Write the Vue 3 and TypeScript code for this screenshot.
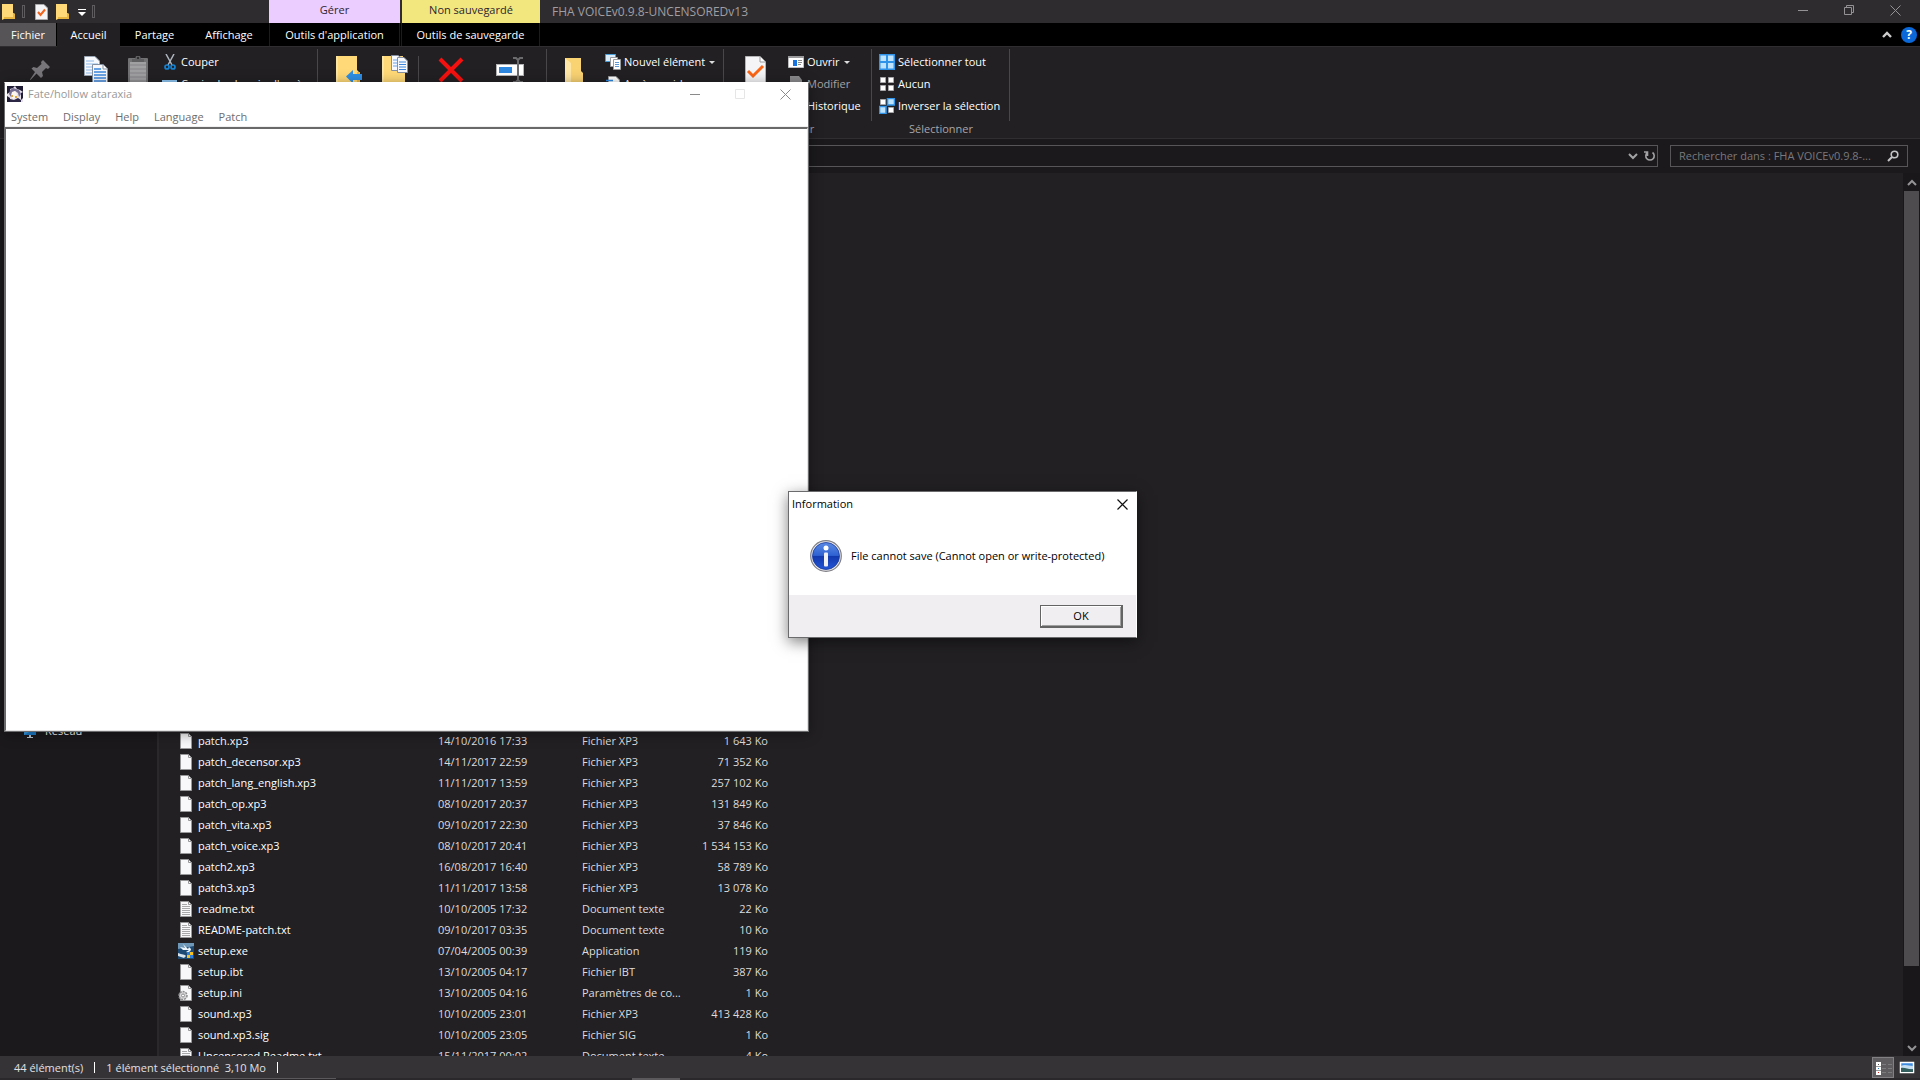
<script setup lang="ts">
type FileKind = 'file' | 'text' | 'setup' | 'ini'

interface FileRow {
  name: string
  date: string
  type: string
  size: string
  kind: FileKind
}

const files: FileRow[] = [
  { name: 'patch.xp3', date: '14/10/2016 17:33', type: 'Fichier XP3', size: '1 643 Ko', kind: 'file' },
  { name: 'patch_decensor.xp3', date: '14/11/2017 22:59', type: 'Fichier XP3', size: '71 352 Ko', kind: 'file' },
  { name: 'patch_lang_english.xp3', date: '11/11/2017 13:59', type: 'Fichier XP3', size: '257 102 Ko', kind: 'file' },
  { name: 'patch_op.xp3', date: '08/10/2017 20:37', type: 'Fichier XP3', size: '131 849 Ko', kind: 'file' },
  { name: 'patch_vita.xp3', date: '09/10/2017 22:30', type: 'Fichier XP3', size: '37 846 Ko', kind: 'file' },
  { name: 'patch_voice.xp3', date: '08/10/2017 20:41', type: 'Fichier XP3', size: '1 534 153 Ko', kind: 'file' },
  { name: 'patch2.xp3', date: '16/08/2017 16:40', type: 'Fichier XP3', size: '58 789 Ko', kind: 'file' },
  { name: 'patch3.xp3', date: '11/11/2017 13:58', type: 'Fichier XP3', size: '13 078 Ko', kind: 'file' },
  { name: 'readme.txt', date: '10/10/2005 17:32', type: 'Document texte', size: '22 Ko', kind: 'text' },
  { name: 'README-patch.txt', date: '09/10/2017 03:35', type: 'Document texte', size: '10 Ko', kind: 'text' },
  { name: 'setup.exe', date: '07/04/2005 00:39', type: 'Application', size: '119 Ko', kind: 'setup' },
  { name: 'setup.ibt', date: '13/10/2005 04:17', type: 'Fichier IBT', size: '387 Ko', kind: 'file' },
  { name: 'setup.ini', date: '13/10/2005 04:16', type: 'Paramètres de co...', size: '1 Ko', kind: 'ini' },
  { name: 'sound.xp3', date: '10/10/2005 23:01', type: 'Fichier XP3', size: '413 428 Ko', kind: 'file' },
  { name: 'sound.xp3.sig', date: '10/10/2005 23:05', type: 'Fichier SIG', size: '1 Ko', kind: 'file' },
  { name: 'Uncensored Readme.txt', date: '15/11/2017 00:02', type: 'Document texte', size: '4 Ko', kind: 'text' },
]

const menus: string[] = ['System', 'Display', 'Help', 'Language', 'Patch']
</script>

<template>
  <div class="desktop">
    <main class="explorer">
      <header class="titlebar">
        <div class="quick">
          <svg class="q-icon" width="14" height="16" viewBox="0 0 14 16"><path d="M0 0H11V9L13 10V15H2L0 16Z" fill="#ffd977" /><path d="M2 15H13V10L11 9V13H2Z" fill="#e9b740" /></svg>
          <i class="q-sep"></i>
          <svg class="q-icon" width="13" height="16" viewBox="0 0 13 16"><path d="M.5.5H9L12.500 4V15.500H.5Z" fill="#f4f4f6" stroke="#a9a9ab" /><path d="M3 8L5.500 11L10 5.500" fill="none" stroke="#f2631c" stroke-width="2" /></svg>
          <svg class="q-icon" width="14" height="16" viewBox="0 0 14 16"><path d="M0 0H11V9L13 10V15H2L0 16Z" fill="#ffd977" /><path d="M2 15H13V10L11 9V13H2Z" fill="#e9b740" /></svg>
          <svg class="q-icon" width="8" height="8" viewBox="0 0 8 8"><path d="M0 1.500H8" stroke="#fff" /><path d="M0 4H8L4 8Z" fill="#fff" /></svg>
          <i class="q-sep"></i>
        </div>
        <div class="context purple">Gérer</div>
        <div class="context yellow">Non sauvegardé</div>
        <h1 class="title">FHA VOICEv0.9.8-UNCENSOREDv13</h1>
        <div class="win-buttons">
          <button type="button" aria-label="Réduire"><svg width="11" height="11" viewBox="0 0 11 11"><path d="M0 5.500H10" stroke="#949294" /></svg></button>
          <button type="button" aria-label="Restaurer"><svg width="11" height="11" viewBox="0 0 11 11" fill="none" stroke="#949294"><path d="M.5 2.500H7.500V9.500H.5ZM2.500 2.500V.5H9.500V7.500H7.500" /></svg></button>
          <button type="button" aria-label="Fermer"><svg width="11" height="11" viewBox="0 0 11 11"><path d="M.5.5L10.500 10.500M10.500.5L.5 10.500" stroke="#949294" /></svg></button>
        </div>
      </header>

      <nav class="tabs">
        <button type="button" class="tab file">Fichier</button>
        <button type="button" class="tab home">Accueil</button>
        <button type="button" class="tab share">Partage</button>
        <button type="button" class="tab view">Affichage</button>
        <button type="button" class="tab app-tools">Outils d'application</button>
        <button type="button" class="tab save-tools">Outils de sauvegarde</button>
        <div class="tab-tail">
          <svg width="10" height="7" viewBox="0 0 10 7"><path d="M1 6L5 2L9 6" fill="none" stroke="#ccc" stroke-width="2.400" /></svg>
          <span class="help">?</span>
        </div>
      </nav>

      <section class="ribbon">
        <div class="group g-clip">
          <div class="tools">
            <button type="button" class="big pin" aria-label="Épingler">
              <svg width="32" height="32" viewBox="0 0 32 32"><path d="M19 5L26 12L24 14L22 13L18 17L19 21L17 23L12.500 18.500L6.500 25L6 24.500L11 17L7.500 13.500L9.500 12L13 13L17.500 9L17 7Z" fill="#77757a" /></svg>
            </button>
            <button type="button" class="big copy" aria-label="Copier">
              <svg width="32" height="32" viewBox="0 0 32 32"><path d="M4.500 1.500H15L19.500 6V20.500H4.500Z" fill="#f7f9fc" stroke="#9aa6b5" /><path d="M6 6H14M6 9H18M6 12H18M6 15H18M6 18H18" stroke="#8db8ea" /><path d="M12.500 9.500H23L27.500 14V31.500H12.500Z" fill="#f7f9fc" stroke="#8591a2" /><path d="M23 9.500V14H27.500" fill="#fff" stroke="#8591a2" /><path d="M14 14H21M14 17H26M14 20H26M14 23H26M14 26H26M14 29H26" stroke="#3d86dd" stroke-width="1.500" /></svg>
            </button>
            <button type="button" class="big paste" aria-label="Coller">
              <svg width="32" height="32" viewBox="0 0 32 32"><rect x="6" y="3" width="20" height="29" rx="1" fill="#727174" /><rect x="8" y="7" width="16" height="24" fill="#a09fa2" /><path d="M8 10H24M8 14H24M8 18H24M8 22H24M8 26H24" stroke="#858487" /><path d="M10 7V4H13L14 1H18L19 4H22V7Z" fill="#5f5e61" /><circle cx="16" cy="3" r="1" fill="#222" /></svg>
            </button>
            <div class="small-col">
              <button type="button" class="small">
                <svg width="16" height="16" viewBox="0 0 16 16" fill="none"><path d="M4 0L10 11M12 0L6 11" stroke="#aeb7bf" stroke-width="1.500" /><circle cx="5" cy="13" r="2" stroke="#1583d2" stroke-width="1.700" /><circle cx="11" cy="13" r="2" stroke="#1583d2" stroke-width="1.700" /></svg>Couper
              </button>
              <button type="button" class="small">
                <svg width="16" height="16" viewBox="0 0 16 16"><path d="M0 4H15V14H0Z" fill="#8fc5f2" /><path d="M2 7H13V12H2Z" fill="#fff" /></svg>Copier le chemin d'accès
              </button>
            </div>
          </div>
        </div>

        <div class="group g-org">
          <div class="tools">
            <button type="button" class="big move" aria-label="Déplacer vers">
              <svg width="32" height="32" viewBox="0 0 32 32"><path d="M3 1H24V15L27 18V32H3Z" fill="#ffd977" /><path d="M3 1H5V32H3Z" fill="#fbe5a5" /><path d="M24 17H27V32H24Z" fill="#e8b646" /><path d="M13 21.500L20 15V19H29V25H20V28.500Z" fill="#2f8fe5" /></svg>
            </button>
            <button type="button" class="big move" aria-label="Copier vers">
              <svg width="32" height="32" viewBox="0 0 32 32"><path d="M3 1H24V15L26 18V32H3Z" fill="#ffd977" /><path d="M3 1H5V32H3Z" fill="#fbe5a5" /><path d="M12.500.5H19L22.500 3V15.500H12.500Z" fill="#f7f9fc" stroke="#8591a2" /><path d="M14 5H20M14 8H20M14 11H20" stroke="#6da4e8" /><path d="M18.500 2.500H25L28.500 6V17.500H18.500Z" fill="#f7f9fc" stroke="#8591a2" /><path d="M20 7H27M20 9.500H27M20 12H27M20 14.500H27" stroke="#3d86dd" /></svg>
            </button>
            <i class="inner-sep"></i>
            <button type="button" class="big delete" aria-label="Supprimer">
              <svg width="32" height="32" viewBox="0 0 32 32"><path d="M5 4L27 26M27 4L5 26" stroke="#f5110f" stroke-width="4" /></svg>
            </button>
            <button type="button" class="big rename" aria-label="Renommer">
              <svg width="32" height="32" viewBox="0 0 32 32"><rect x="2.500" y="9.500" width="27" height="11" fill="#fff" stroke="#b4b3b6" /><rect x="5" y="12" width="13" height="6" fill="#2d88e2" /><path d="M19 3H22L24 5L26 3H29M24 5V25M19 27H22L24 25L26 27H29" fill="none" stroke="#6b6a6d" stroke-width="2" /></svg>
            </button>
          </div>
        </div>

        <div class="group g-new">
          <div class="tools">
            <button type="button" class="big folder" aria-label="Nouveau dossier">
              <svg width="32" height="32" viewBox="0 0 32 32"><path d="M7 3H23V16L25 18V32H7Z" fill="#f9d272" /><path d="M7 3L13 8V32H7Z" fill="#fee6a6" /></svg>
            </button>
            <div class="small-col">
              <button type="button" class="small">
                <svg width="16" height="16" viewBox="0 0 16 16"><path d="M.5.500H10.500V7.500H.5Z" fill="#d9edfb" stroke="#4b9fd8" /><path d="M5.500 3.500H12.500V12.500H5.500Z" fill="#fff" stroke="#9a9a9d" /><path d="M8.500 5.500H15.500V15.500H8.500Z" fill="#fff" stroke="#9a9a9d" /><path d="M10 8.500H14M10 10.500H14M10 12.500H14" stroke="#5d97d4" /></svg>Nouvel élément<i class="caret"></i>
              </button>
              <button type="button" class="small">
                <svg width="16" height="16" viewBox="0 0 16 16"><path d="M3.500.500H11L14.500 4V15.500H3.500Z" fill="#fff" stroke="#9a9a9d" /><path d="M1 4.500H8M5 7.500H12" stroke="#2d88e2" stroke-width="1.500" /></svg>Accès rapide
              </button>
            </div>
          </div>
        </div>

        <div class="group g-open">
          <div class="tools">
            <button type="button" class="big props" aria-label="Propriétés">
              <svg width="32" height="32" viewBox="0 0 32 32"><path d="M6.500 1.500H21L26.500 7V31.500H6.500Z" fill="#f5f5f7" stroke="#b4b4b7" /><path d="M21 1.500V7H26.500" fill="#fff" stroke="#9a9a9d" /><path d="M9 16L14 21L24 11" fill="none" stroke="#fb6514" stroke-width="3" /></svg>
            </button>
            <div class="small-col">
              <button type="button" class="small">
                <svg width="16" height="16" viewBox="0 0 16 16"><path d="M.5 2.500H15.500V13.500H.5Z" fill="#fff" stroke="#bdbdc0" /><path d="M0 3H16" stroke="#9a9a9d" stroke-width="2" /><path d="M5 6H9V12H5Z" fill="#1673e0" /><path d="M10 6.500H14M10 8.500H14M10 10.500H13" stroke="#888" /></svg>Ouvrir<i class="caret"></i>
              </button>
              <button type="button" class="small dim">
                <svg width="16" height="16" viewBox="0 0 16 16"><path d="M2 0H11L14 4V16H2Z" fill="#8a898c" /></svg>Modifier
              </button>
              <button type="button" class="small">
                <svg width="16" height="16" viewBox="0 0 16 16"><circle cx="8" cy="8" r="7" fill="#4b9fd8" /></svg>Historique
              </button>
            </div>
          </div>
          <span class="group-label">Ouvrir</span>
        </div>

        <div class="group g-select">
          <div class="tools">
            <div class="small-col">
              <button type="button" class="small">
                <svg width="16" height="16" viewBox="0 0 16 16"><path d="M0 0H16V16H0Z" fill="#2f93e8" /><path d="M1.500 1.500H7V7H1.500ZM9 1.500H14.500V7H9ZM1.500 9H7V14.500H1.500ZM9 9H14.500V14.500H9Z" fill="#bfe2fd" /></svg>Sélectionner tout
              </button>
              <button type="button" class="small">
                <svg width="16" height="16" viewBox="0 0 16 16" fill="#fff" stroke="#a8a7aa"><path d="M1.500 1.500H6.500V6.500H1.500ZM9.500 1.500H14.500V6.500H9.500ZM1.500 9.500H6.500V14.500H1.500ZM9.500 9.500H14.500V14.500H9.500Z" /></svg>Aucun
              </button>
              <button type="button" class="small">
                <svg width="16" height="16" viewBox="0 0 16 16"><path d="M1.500 1.500H6.500V6.500H1.500ZM9.500 9.500H14.500V14.500H9.500Z" fill="#fff" stroke="#a8a7aa" /><path d="M8.500.5H15.500V7H8.500ZM.5 8.500H7V15.500H.5Z" fill="#bfe2fd" stroke="#2f93e8" stroke-width="1.600" /></svg>Inverser la sélection
              </button>
            </div>
          </div>
          <span class="group-label">Sélectionner</span>
        </div>
      </section>

      <div class="address-row">
        <div class="address">
          <svg width="10" height="8" viewBox="0 0 10 8"><path d="M1 2L5 6L9 2" fill="none" stroke="#a3a2a4" stroke-width="2" /></svg>
          <svg width="12" height="12" viewBox="0 0 12 12"><path d="M8.500 2.500A4.200 4.200 0 1 1 3.500 2.500M3.500 6V2H0" fill="none" stroke="#a3a2a4" stroke-width="1.600" /></svg>
        </div>
        <div class="search">
          <input type="search" aria-label="Rechercher" placeholder="Rechercher dans : FHA VOICEv0.9.8-..." />
          <svg width="12" height="12" viewBox="0 0 12 12"><circle cx="7.500" cy="4.500" r="3.300" fill="none" stroke="#c4c3c5" stroke-width="1.600" /><path d="M5 7L1 11" stroke="#c4c3c5" stroke-width="2" /></svg>
        </div>
      </div>

      <div class="body">
        <aside class="sidebar">
          <a class="network" href="#">
            <svg width="16" height="16" viewBox="0 0 16 16"><path d="M2 1H14V12H2Z" fill="#3aa3ea" /><path d="M2 12L14 5V12Z" fill="#1c7fcf" /><path d="M7 12H9V14H7ZM5 14H11V15H5Z" fill="#b9c7d2" /></svg>Réseau
          </a>
        </aside>
        <div class="list">
          <table>
            <tbody>
              <tr v-for="f in files" :key="f.name">
                <td class="c-name">
                  <span class="name">
                    <svg width="16" height="16" viewBox="0 0 16 16">
                      <template v-if="f.kind === 'setup'">
                        <rect width="16" height="16" fill="#1d4a75" /><path d="M0 0H16V3L0 6Z" fill="#6f97b8" /><path d="M5 1L7 5L2 4L5 7L11 7L8 9C11 10 13 8 13 6L11 4L10 6Z" fill="#eef6fb" /><path d="M0 10C4 12 7 11 8 13L6 15L0 13Z" fill="#d8e4ec" /><path d="M9 9H12V12H9ZM12 12H15V15H12Z" fill="#2b7de0" /><path d="M12 9H15V12H12ZM9 12H12V15H9Z" fill="#f7c21d" />
                      </template>
                      <template v-else>
                        <path d="M2.500.500H10.500L13.500 3.500V15.500H2.500Z" fill="#f8f8fa" stroke="#98979a" /><path d="M10.500.5V3.500H13.500" fill="none" stroke="#98979a" />
                        <path v-if="f.kind === 'text'" d="M4 3.500H9M4 5.500H12M4 7.500H12M4 9.500H12M4 11.500H12M4 13.500H12" stroke="#a8a7aa" />
                        <g v-if="f.kind === 'ini'"><circle cx="5" cy="10.500" r="4" fill="#d5d4d7" stroke="#8d8c8f" stroke-width="1.500" stroke-dasharray="2 1" /><circle cx="5" cy="10.500" r="1.500" fill="#fff" stroke="#8d8c8f" /></g>
                      </template>
                    </svg>{{ f.name }}
                  </span>
                </td>
                <td class="c-date">{{ f.date }}</td>
                <td class="c-type">{{ f.type }}</td>
                <td class="c-size">{{ f.size }}</td>
              </tr>
            </tbody>
          </table>
        </div>
        <div class="scrollbar">
          <svg width="10" height="8" viewBox="0 0 10 8"><path d="M1 6L5 2L9 6" fill="none" stroke="#949395" stroke-width="2" /></svg>
          <div class="track"><div class="thumb"></div><div class="rest"></div></div>
          <svg width="10" height="8" viewBox="0 0 10 8"><path d="M1 2L5 6L9 2" fill="none" stroke="#949395" stroke-width="2" /></svg>
        </div>
      </div>

      <footer class="status">
        <span>44 élément(s)</span><i></i><span class="picked">1 élément sélectionné&nbsp; 3,10 Mo</span><i></i>
        <div class="views">
          <button type="button" class="view-btn active" aria-label="Détails"><svg width="22" height="20" viewBox="0 0 22 20"><path d="M3 4H8V17H3Z" fill="#fff" /><path d="M5 6.500H6" stroke="#555" /><path d="M5 10.500H6" stroke="#2779c9" /><path d="M5 14.500H6" stroke="#d22" /><path d="M3 8.500H8M3 12.500H8" stroke="#99989b" /><path d="M9 6.500H13M15 6.500H19M9 10.500H13M15 10.500H19M9 14.500H13M15 14.500H19" stroke="#7c7b7e" /></svg></button>
          <button type="button" class="view-btn" aria-label="Grandes icônes"><svg width="22" height="20" viewBox="0 0 22 20"><rect x="4.500" y="4.500" width="13" height="10" fill="#3f8be0" stroke="#fff" stroke-width="1.500" /><path d="M5 8C9 6 13 8 17 8V11H5Z" fill="#c5def2" /><path d="M5 10C9 9 13 12 17 11V14H5Z" fill="#33605f" /></svg></button>
        </div>
      </footer>
      <div class="taskbar"><i class="task wide"></i><i class="task"></i></div>
    </main>

    <section class="game">
      <header class="game-title">
        <svg width="16" height="16" viewBox="0 0 16 16"><rect width="16" height="16" fill="#e4dfe8" /><path d="M0 0H8L6 2L3 3V6L0 8ZM8 0H16V6L13 4L10 3ZM0 10L3 12V16H0ZM14 7L16 6V12L14 14Z" fill="#201c35" /><path d="M3 4L6 2L12 4L14 8L12 11L11 7L8 5L5 7L4 11L2 8Z" fill="#776f92" /><path d="M5 6L8 5L10 8L9 12L6 13L4 10Z" fill="#fdf6ef" /><path d="M4 9H6V11H4ZM8 10H10V12H8Z" fill="#e1a63c" /><path d="M3 13L7 14L11 12L14 14V16H3Z" fill="#2b2744" /></svg>
        <h2>Fate/hollow ataraxia</h2>
        <div class="game-buttons">
          <button type="button" aria-label="Minimize"><svg width="11" height="11" viewBox="0 0 11 11"><path d="M0 5.500H10" stroke="#8a8a8a" /></svg></button>
          <button type="button" aria-label="Maximize" disabled><svg width="11" height="11" viewBox="0 0 11 11"><path d="M.5.5H9.500V9.500H.5Z" fill="none" stroke="#e6e6e6" /></svg></button>
          <button type="button" aria-label="Close"><svg width="11" height="11" viewBox="0 0 11 11"><path d="M.5.5L10.500 10.500M10.500.5L.5 10.500" stroke="#8a8a8a" /></svg></button>
        </div>
      </header>
      <nav class="game-menu"><button v-for="m in menus" :key="m" type="button">{{ m }}</button></nav>
      <div class="canvas"></div>
    </section>

    <section class="dialog" role="dialog" aria-labelledby="dialog-title">
      <header>
        <h2 id="dialog-title">Information</h2>
        <button type="button" aria-label="Close"><svg width="11" height="11" viewBox="0 0 11 11"><path d="M.5.5L10.500 10.500M10.500.5L.5 10.500" stroke="#111" stroke-width="1.200" /></svg></button>
      </header>
      <div class="message">
        <svg width="32" height="32" viewBox="0 0 32 32">
          <defs><linearGradient id="blue" x2="0" y2="1"><stop offset="0" stop-color="#5b8ae4" /><stop offset=".48" stop-color="#2f62d2" /><stop offset=".5" stop-color="#1238ad" /><stop offset="1" stop-color="#2456d6" /></linearGradient></defs>
          <circle cx="16" cy="16" r="15.300" fill="#e9e9ec" stroke="#7f7f86" stroke-width="1.200" /><circle cx="16" cy="16" r="13.500" fill="url(#blue)" stroke="#17399c" stroke-width=".8" /><circle cx="16" cy="8" r="2.500" fill="#fff" /><rect x="14" y="12.500" width="4" height="14" rx="1" fill="#f1f1f3" />
        </svg>
        <p>File cannot save (Cannot open or write-protected)</p>
      </div>
      <footer><button type="button" class="ok">OK</button></footer>
    </section>
  </div>
</template>

<style>
body {
  margin: 0;
  background: #222023;
}
</style>

<style scoped>
* {
  box-sizing: border-box;
}
.desktop {
  position: relative;
  height: 100vh;
  overflow: hidden;
  font-family: "Open Sans", "Noto Sans", sans-serif;
  font-size: 11px;
  line-height: 16px;
  color: #fff;
}
button {
  margin: 0;
  padding: 0;
  border: 0;
  background: none;
  font: inherit;
  color: inherit;
  white-space: nowrap;
}
h1,
h2,
p {
  margin: 0;
  font-size: inherit;
  font-weight: 400;
  white-space: nowrap;
}
svg {
  display: block;
  flex: none;
}
.explorer {
  display: flex;
  flex-direction: column;
  height: 100%;
  background: #222023;
}

/* title bar */
.titlebar {
  display: flex;
  flex: none;
  height: 23px;
  background: #2e2c2f;
}
.quick {
  display: flex;
  align-items: center;
  gap: 8px;
  width: 269px;
  padding-left: 2px;
}
.q-sep {
  width: 3px;
  height: 13px;
  margin: 0 2px 0 -2px;
  border: 1px solid #5e5c5f;
}
.context {
  width: 131px;
  margin-right: 2px;
  padding-top: 2px;
  text-align: center;
  color: #2d2430;
}
.purple {
  background: #ebcdff;
}
.yellow {
  width: 138px;
  background: #f2e77e;
}
.title {
  flex: 1;
  padding: 4px 10px;
  font-size: 12px;
  color: #a09ea1;
}
.win-buttons {
  display: flex;
  padding-right: 2px;
}
.win-buttons button {
  display: grid;
  place-items: center;
  width: 46px;
  height: 21px;
}

/* ribbon tabs */
.tabs {
  display: flex;
  flex: none;
  height: 24px;
  background: #000;
  border-bottom: 1px solid #2f2d30;
}
.tab {
  height: 23px;
  text-align: center;
}
.file {
  width: 56px;
  background: #565457;
}
.home {
  width: 63px;
  height: 24px;
  margin-left: 1px;
  background: #222023;
}
.share {
  width: 69px;
}
.view {
  width: 80px;
}
.app-tools {
  width: 131px;
  border-left: 1px solid #1c1b1d;
  border-right: 1px solid #1c1b1d;
}
.save-tools {
  width: 139px;
  margin-left: 1px;
  border-left: 1px solid #1c1b1d;
  border-right: 1px solid #1c1b1d;
}
.tab-tail {
  display: flex;
  align-items: center;
  gap: 9px;
  margin-left: auto;
  padding-right: 3px;
}
.help {
  width: 16px;
  height: 16px;
  border-radius: 50%;
  background: #0a68d8;
  font-size: 12px;
  font-weight: 700;
  text-align: center;
}

/* ribbon */
.ribbon {
  display: flex;
  flex: none;
  height: 92px;
  border-bottom: 1px solid #302e31;
}
.group {
  display: flex;
  flex-direction: column;
  padding-top: 2px;
  background: linear-gradient(#49474a, #49474a) right 2px / 1px 72px no-repeat;
  background-position: right 2px;
}
.g-clip {
  width: 318px;
  padding-left: 4px;
}
.g-org {
  width: 229px;
  padding-left: 8px;
}
.g-new {
  width: 177px;
}
.g-open {
  width: 148px;
}
.g-select {
  width: 138px;
}
.tools {
  display: flex;
  height: 72px;
}
.big {
  display: flex;
  justify-content: center;
  height: 72px;
  padding-top: 6px;
}
.pin {
  width: 72px;
}
.copy {
  width: 40px;
}
.paste {
  width: 44px;
}
.move {
  width: 46px;
}
.delete {
  width: 64px;
}
.rename,
.folder {
  width: 54px;
}
.props {
  width: 62px;
}
.inner-sep {
  width: 1px;
  margin-top: 7px;
  background: #49474a;
}
.small-col {
  display: flex;
  flex-direction: column;
  padding: 2px 0 0 2px;
}
.g-new .small-col {
  padding-left: 4px;
}
.g-select .small-col {
  padding-left: 7px;
}
.small {
  display: flex;
  align-items: center;
  gap: 3px;
  height: 22px;
}
.dim {
  color: #a5a3a6;
}
.caret {
  width: 6px;
  margin-left: 1px;
  border: 3px solid transparent;
  border-top-color: #ddd;
  border-bottom: 0;
}
.group-label {
  text-align: center;
  color: #a8a6a9;
}

/* address bar */
.address-row {
  display: flex;
  flex: none;
  gap: 12px;
  height: 34px;
  padding: 6px 12px 6px 8px;
  background: #1b191c;
}
.address,
.search {
  display: flex;
  align-items: center;
  border: 1px solid #575558;
}
.address {
  flex: 1;
  justify-content: flex-end;
  gap: 6px;
  padding-right: 1px;
}
.search {
  width: 238px;
  padding: 0 8px;
}
.search input {
  flex: 1;
  min-width: 0;
  height: 18px;
  padding: 0 0 2px;
  border: 0;
  outline: 0;
  background: none;
  font: inherit;
  color: #fff;
}
.search input::placeholder {
  color: #7a787b;
}

/* content */
.body {
  display: flex;
  flex: 1;
  min-height: 0;
}
.sidebar {
  flex: none;
  display: flex;
  flex-direction: column;
  justify-content: flex-end;
  width: 159px;
  padding: 0 0 315px 22px;
  background: #1b191c;
  border-right: 2px solid #2a282b;
}
.network {
  display: flex;
  align-items: center;
  gap: 7px;
  height: 21px;
  color: #fff;
  text-decoration: none;
}
.list {
  display: flex;
  flex: 1;
  flex-direction: column;
  justify-content: flex-end;
  align-items: flex-start;
  padding-left: 19px;
  overflow: hidden;
}
table {
  flex: none;
  margin-bottom: -10px;
  border-collapse: collapse;
  table-layout: fixed;
  width: 590px;
}
td {
  height: 21px;
  padding: 0;
  color: #dddcde;
  white-space: nowrap;
}
.c-name {
  width: 260px;
}
.c-date {
  width: 144px;
}
.c-type {
  width: 106px;
}
.c-size {
  width: 80px;
  text-align: right;
}
.name {
  display: flex;
  align-items: center;
  gap: 4px;
  color: #fff;
}
.scrollbar {
  display: flex;
  flex-direction: column;
  align-items: center;
  gap: 4px;
  width: 17px;
  padding: 6px 0 4px;
  background: #19171a;
}
.track {
  display: flex;
  flex: 1;
  flex-direction: column;
  width: 15px;
}
.thumb {
  flex: 21;
  background: #4e4c4f;
}
.rest {
  flex: 2;
}

/* status bar */
.status {
  display: flex;
  flex: none;
  align-items: center;
  height: 22px;
  padding: 1px 2px 0 14px;
  gap: 11px;
  background: #353336;
  color: #e2e0e3;
}
.status i {
  width: 1px;
  height: 11px;
  background: #fff;
}
.views {
  display: flex;
  gap: 2px;
  margin-left: auto;
}
.view-btn {
  display: grid;
  place-items: center;
  width: 22px;
  height: 21px;
}
.active {
  background: #5f5d60;
  border: 1px solid #828083;
}
.taskbar {
  display: flex;
  flex: none;
  gap: 296px;
  height: 2px;
  padding-left: 48px;
  background: #2a282b;
}
.task {
  width: 48px;
  background: #5b595c;
}
.wide {
  width: 288px;
  height: 1px;
}

/* game window */
.game {
  position: absolute;
  top: 82px;
  left: 4px;
  display: flex;
  flex-direction: column;
  width: 805px;
  height: 650px;
  border: 1px solid #6b6a6c;
  border-top-color: #fff;
  background: #fff;
  box-shadow: 0 2px 12px rgba(0, 0, 0, 0.4);
}
.game-title {
  display: flex;
  align-items: center;
  gap: 5px;
  height: 22px;
  padding-left: 2px;
  color: #999;
}
.game-buttons {
  display: flex;
  margin-left: auto;
}
.game-buttons button {
  display: grid;
  place-items: center;
  width: 45px;
  height: 22px;
}
.game-menu {
  display: flex;
  height: 22px;
  padding: 2px 0 0 6px;
  gap: 15px;
  border-bottom: 1px solid #f0f0f0;
  color: #6d6d6d;
}
.canvas {
  flex: 1;
  border: 2px solid #696969;
  border-width: 2px 1px 1px;
  border-right-color: #e3e3e3;
  border-bottom-color: #e3e3e3;
}

/* message box */
.dialog {
  position: absolute;
  top: 491px;
  left: 788px;
  display: flex;
  flex-direction: column;
  width: 349px;
  height: 147px;
  border: 1px solid #6b6a6c;
  border-right-color: #fff;
  background: #fff;
  box-shadow: 0 4px 14px rgba(0, 0, 0, 0.5);
  color: #000;
}
.dialog header {
  display: flex;
  justify-content: space-between;
  align-items: center;
  height: 24px;
  padding: 0 8px 0 3px;
}
.message {
  display: flex;
  flex: 1;
  align-items: center;
  gap: 9px;
  padding: 1px 21px 0;
}
.dialog footer {
  display: flex;
  justify-content: flex-end;
  align-items: center;
  height: 42px;
  padding-right: 13px;
  background: #f0eef0;
}
.ok {
  width: 83px;
  height: 23px;
  border: 1px solid #646464;
  border-right-width: 2px;
  border-bottom-width: 2px;
  box-shadow: inset 1px 1px #fff, inset -1px -1px #a0a0a0;
}
</style>
